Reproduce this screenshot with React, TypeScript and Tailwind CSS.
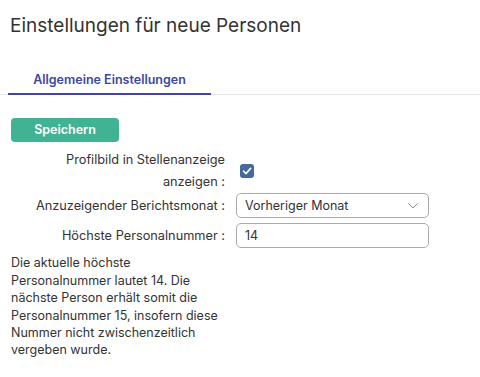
import React from "react";

export default function App() {
  return (
    <div className="w-[480px] h-[377px] bg-white text-[#333] overflow-hidden" style={{ fontFamily: "Inter, 'Noto Sans', sans-serif" }}>
      <h1 className="pl-[10px] pt-[12px] text-[19px] leading-[28px] font-normal text-[#333]">Einstellungen für neue Personen</h1>
      <div className="mt-[31px] border-b border-[#e5e5e5] flex">
        <div className="ml-[8px] w-[203px] border-b-2 border-[#4046a0] text-center text-[12.5px] leading-[18px] font-semibold text-[#4046a0] pb-[4px] -mb-[1px]">
          Allgemeine Einstellungen
        </div>
      </div>
      <div className="pl-[11px] pt-[21px]">
        <button className="w-[108px] h-[24px] rounded-[4px] bg-[#3fb394] text-white text-[12.5px] font-semibold">Speichern</button>
      </div>
      <div className="grid grid-cols-[214px_193px] gap-x-[11px] pl-[11px] mt-[7px] text-[12.75px] text-[#333]">
        <div className="text-right leading-[22px]">Profilbild in Stellenanzeige<br />anzeigen :</div>
        <div className="flex items-center">
          <div className="ml-[4px] w-[14px] h-[14px] rounded-[3px] bg-[#44689f] flex items-center justify-center">
            <svg width="10" height="10" viewBox="0 0 10 10"><path d="M1.5 5.2 L4 7.6 L8.6 2.4" fill="none" stroke="white" strokeWidth="1.6" strokeLinecap="round" strokeLinejoin="round" /></svg>
          </div>
        </div>
        <div className="text-right flex items-center justify-end">Anzuzeigender Berichtsmonat :</div>
        <div className="h-[25px] rounded-[5px] border border-[#aaa] flex items-center justify-between pl-[8px] pr-[10px] text-[12.5px]">
          <span>Vorheriger Monat</span>
          <svg width="10" height="6" viewBox="0 0 10 6"><path d="M0.5 0.5 L5 5 L9.5 0.5" fill="none" stroke="#888" strokeWidth="1" /></svg>
        </div>
        <div className="text-right flex items-center justify-end mt-[5px]">Höchste Personalnummer :</div>
        <div className="h-[25px] mt-[5px] rounded-[5px] border border-[#aaa] flex items-center pl-[8px] text-[12.5px]">14</div>
      </div>
      <p className="pl-[11px] w-[234px] mt-[6px] text-[12.5px] leading-[17.4px] text-[#333]">
        Die aktuelle höchste Personalnummer lautet 14. Die nächste Person erhält somit die Personalnummer 15, insofern diese Nummer nicht zwischenzeitlich vergeben wurde.
      </p>
    </div>
  );
}
